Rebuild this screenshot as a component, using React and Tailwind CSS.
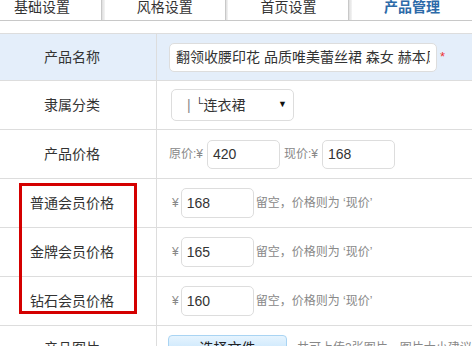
import React from "react";

const font = { fontFamily: '"Liberation Sans", "Noto Sans CJK SC", sans-serif' };

const Strip = ({ w = "w-[10px]" }) => (
  <div className={`${w} h-full border-l border-[#c8c8c8] bg-gradient-to-r from-[#dedede] to-[#f4f4f4]`} />
);

const Row = ({ label, blue, top, children }) => (
  <div
    className={`flex border-b border-[#dddddd] ${top ? "border-t h-[48px]" : "h-[49px]"} ${blue ? "bg-[#e4eefa]" : "bg-white"}`}
  >
    <div className="w-[157px] shrink-0 border-r border-[#dddddd] flex items-center justify-center pr-[12px] text-[14px] text-[#333]">
      {label}
    </div>
    <div className="flex-1 flex items-center pl-[12px] min-w-0">{children}</div>
  </div>
);

const MemberPrice = ({ value }) => (
  <>
    <span className="text-[12px] text-[#888] ml-[3px]">¥</span>
    <div className="ml-[2px] w-[73px] h-[30px] rounded-[5px] border border-[#dddddd] bg-white flex items-center px-[5px] text-[14px] text-[#333]">
      {value}
    </div>
    <span className="ml-[2px] text-[12px] text-[#888]">留空，价格则为 ‘现价’</span>
  </>
);

export default function App() {
  return (
    <div className="relative w-[472px] h-[346px] overflow-hidden bg-white" style={font}>
      {/* tabs */}
      <div className="flex h-[21px] border-b border-[#c8c8c8] overflow-hidden whitespace-nowrap">
        <div className="w-[101px] shrink-0 pl-[14px] text-[14px] leading-[15px] text-[#333]">基础设置</div>
        <Strip w="w-[11px]" />
        <div className="w-[120px] shrink-0 text-center text-[14px] leading-[15px] text-[#333]">风格设置</div>
        <Strip />
        <div className="w-[120px] shrink-0 text-center text-[14px] leading-[15px] text-[#333]">首页设置</div>
        <Strip />
        <div className="w-[120px] shrink-0 text-center text-[14px] leading-[15px] font-bold text-[#2c6aa8]">产品管理</div>
      </div>

      <div className="h-[12px]" />

      <Row label="产品名称" blue top>
        <div className="w-[268px] h-[29px] shrink-0 rounded-[5px] border border-[#dddddd] bg-white px-[6px] overflow-hidden">
          <div className="h-full flex items-center text-[14px] text-[#333] whitespace-nowrap overflow-hidden">
            翻领收腰印花 品质唯美蕾丝裙 森女 赫本风
          </div>
        </div>
        <span className="ml-[3px] text-[13px] text-[#e33]">*</span>
      </Row>

      <Row label="隶属分类">
        <div className="ml-[2px] w-[123px] h-[32px] rounded-[5px] border border-[#dddddd] bg-white flex items-center pl-[15px] pr-[6px] text-[14px] text-[#333]">
          <span className="text-[#888]">|</span>
          <span className="ml-[5px] text-[11px] leading-none -mt-[4px]">└</span>
          <span>连衣裙</span>
          <span className="ml-auto text-[9px] text-[#111]">▼</span>
        </div>
      </Row>

      <Row label="产品价格">
        <span className="text-[12px] text-[#888]">原价:¥</span>
        <div className="ml-[4px] w-[73px] h-[29px] rounded-[5px] border border-[#dddddd] bg-white flex items-center px-[5px] text-[14px] text-[#333]">
          420
        </div>
        <span className="ml-[4px] text-[12px] text-[#888]">现价:¥</span>
        <div className="ml-[4px] w-[73px] h-[29px] rounded-[5px] border border-[#dddddd] bg-white flex items-center px-[5px] text-[14px] text-[#333]">
          168
        </div>
      </Row>

      <Row label="普通会员价格">
        <MemberPrice value="168" />
      </Row>
      <Row label="金牌会员价格">
        <MemberPrice value="165" />
      </Row>
      <Row label="钻石会员价格">
        <MemberPrice value="160" />
      </Row>

      <div className="flex h-[49px]">
        <div className="w-[157px] shrink-0 border-r border-[#dddddd] flex justify-center pr-[12px] pt-[12px] text-[14px] text-[#333]">
          产品图片
        </div>
        <div className="flex-1 flex items-start pl-[11px] pt-[9px] whitespace-nowrap overflow-hidden">
          <div className="w-[119px] h-[26px] shrink-0 rounded-[4px] border border-[#a9d4f3] bg-gradient-to-b from-[#e6f4fe] to-[#b8defa] flex items-center justify-center text-[14px] text-[#222]">
            选择文件
          </div>
          <span className="ml-[10px] mt-[4px] text-[12px] text-[#888]">共可上传3张图片，图片大小建议800×800</span>
        </div>
      </div>

      {/* annotation */}
      <div className="absolute left-[19px] top-[183px] w-[118px] h-[131px] border-[3px] border-[#d40000]" />
    </div>
  );
}
